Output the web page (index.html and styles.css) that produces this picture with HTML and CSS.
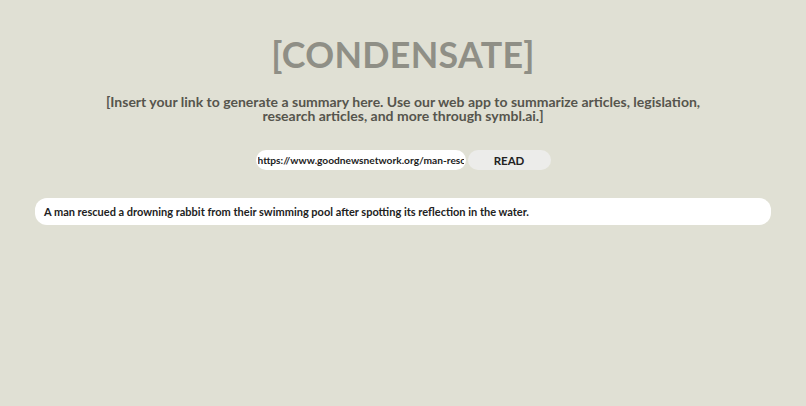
FILE: index.html
```html
<!DOCTYPE html>
<html lang="en">
<head>
<meta charset="utf-8">
<title>Condensate</title>
<link rel="stylesheet" href="styles.css">
</head>
<body>
<main class="page">
  <h1 class="title">[CONDENSATE]</h1>
  <p class="subtitle">[Insert your link to generate a summary here. Use our web app to summarize articles, legislation,<br>research articles, and more through symbl.ai.]</p>
  <form class="form">
    <input class="url" type="text" value="https://www.goodnewsnetwork.org/man-rescues-drowning-rabbit">
    <button class="read" type="button">READ</button>
  </form>
  <div class="result">A man rescued a drowning rabbit from their swimming pool after spotting its reflection in the water.</div>
</main>
</body>
</html>
```
FILE: styles.css
```css
html, body {
  margin: 0;
  padding: 0;
  background: #e0e0d4;
  height: 100%;
}
body {
  font-family: "Lato", "Open Sans", sans-serif;
}
.page {
  display: flex;
  flex-direction: column;
  align-items: center;
  padding: 33px 35px 0;
}
.title {
  margin: 0;
  font-size: 35.8px;
  font-weight: 700;
  color: #8f8f86;
  letter-spacing: 0.3px;
  line-height: 44px;
}
.subtitle {
  margin: 18px 0 0;
  text-align: center;
  font-size: 14px;
  font-weight: 700;
  color: #56554d;
  line-height: 14px;
}
.form {
  display: flex;
  gap: 2px;
  margin-top: 27px;
}
.url {
  width: 210px;
  height: 20px;
  box-sizing: border-box;
  border: none;
  border-radius: 10px;
  background: #fff;
  padding: 0 2px;
  font-family: inherit;
  font-size: 10.2px;
  font-weight: 700;
  color: #222;
  outline: none;
}
.read {
  width: 83px;
  height: 20px;
  border: none;
  border-radius: 10px;
  background: #ececea;
  font-family: inherit;
  font-size: 11.5px;
  font-weight: 700;
  color: #222;
  padding: 0;
}
.result {
  align-self: stretch;
  margin-top: 28px;
  height: 27px;
  box-sizing: border-box;
  background: #fff;
  border-radius: 12px;
  padding: 0 9px;
  display: flex;
  align-items: center;
  font-size: 11px;
  font-weight: 700;
  color: #222;
}
```
